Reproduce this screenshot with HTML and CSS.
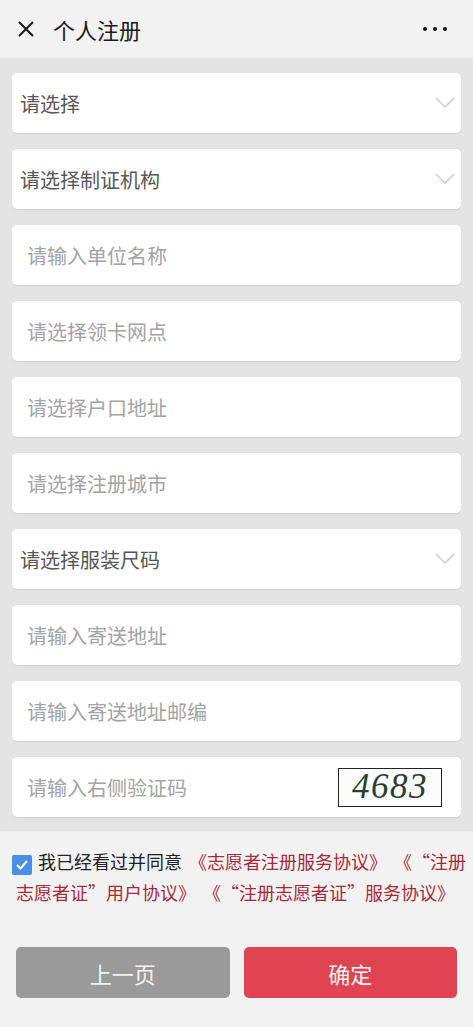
FILE: index.html
```html
<!DOCTYPE html>
<html lang="zh-CN">
<head>
    <meta charset="UTF-8">
    <meta name="viewport" content="width=device-width, initial-scale=1.0">
    <title>个人注册</title>
    <link rel="stylesheet" href="styles.css">
</head>
<body>
    <div class="header">
        <svg class="close" width="18" height="18" viewBox="0 0 18 18">
            <path d="M2 2 L16 16 M16 2 L2 16" stroke="#1a1a1a" stroke-width="2" fill="none"/>
        </svg>
        <h1>个人注册</h1>
        <div class="more"><span></span><span></span><span></span></div>
    </div>

    <div class="form">
        <div class="field select">
            <span>请选择</span>
            <svg class="arrow" width="20" height="12" viewBox="0 0 20 12"><path d="M1 1 L10 10 L19 1" stroke="#d0d0d0" stroke-width="1.6" fill="none"/></svg>
        </div>
        <div class="field select">
            <span>请选择制证机构</span>
            <svg class="arrow" width="20" height="12" viewBox="0 0 20 12"><path d="M1 1 L10 10 L19 1" stroke="#d0d0d0" stroke-width="1.6" fill="none"/></svg>
        </div>
        <div class="field input">请输入单位名称</div>
        <div class="field input">请选择领卡网点</div>
        <div class="field input">请选择户口地址</div>
        <div class="field input">请选择注册城市</div>
        <div class="field select">
            <span>请选择服装尺码</span>
            <svg class="arrow" width="20" height="12" viewBox="0 0 20 12"><path d="M1 1 L10 10 L19 1" stroke="#d0d0d0" stroke-width="1.6" fill="none"/></svg>
        </div>
        <div class="field input">请输入寄送地址</div>
        <div class="field input">请输入寄送地址邮编</div>
        <div class="field input captcha-row">
            <span>请输入右侧验证码</span>
            <div class="captcha">4683</div>
        </div>
    </div>

    <div class="agree">
        <span class="check">
            <svg width="14" height="14" viewBox="0 0 14 14"><path d="M2 7 L5.5 10.5 L12 3" stroke="#fff" stroke-width="2" fill="none"/></svg>
        </span>我已经看过并同意 <span class="link">《志愿者注册服务协议》 《“注册志愿者证”用户协议》 《“注册志愿者证”服务协议》</span>
    </div>

    <div class="buttons">
        <button class="btn prev">上一页</button>
        <button class="btn ok">确定</button>
    </div>
</body>
</html>
```

FILE: styles.css
```css
* {
    margin: 0;
    padding: 0;
    box-sizing: border-box;
}

body {
    background-color: #f2f2f2;
    font-family: "Noto Sans CJK SC", "Noto Sans", sans-serif;
    color: #222;
}

.header {
    height: 58px;
    display: flex;
    align-items: center;
    padding: 0 26px 0 17px;
    gap: 18px;
}

.header h1 {
    font-size: 22px;
    font-weight: normal;
    color: #1a1a1a;
    flex: 1;
}

.more {
    display: flex;
    gap: 6px;
}

.more span {
    width: 4px;
    height: 4px;
    border-radius: 50%;
    background-color: #111;
}

.form {
    background-color: #e4e4e4;
    padding: 15px 12px 14px;
    display: flex;
    flex-direction: column;
    gap: 16px;
}

.field {
    height: 60px;
    background-color: #fff;
    border-radius: 5px;
    box-shadow: 0 1px 1px rgba(0, 0, 0, 0.08);
    display: flex;
    align-items: center;
    font-size: 20px;
}

.select {
    justify-content: space-between;
    padding: 0 6px 0 8px;
    color: #575757;
}

.input {
    padding: 0 19px 0 15px;
    color: #a3a3a3;
}

.captcha-row {
    justify-content: space-between;
}

.captcha {
    width: 104px;
    height: 39px;
    border: 1.5px solid #222;
    background-color: #fbfdfb;
    font-family: "Liberation Serif", serif;
    font-style: italic;
    font-size: 35px;
    line-height: 36px;
    letter-spacing: 1.5px;
    color: #2c3d34;
    text-align: center;
}

.agree {
    padding: 15px 5px 0 16px;
    font-size: 18px;
    line-height: 31px;
    color: #222;
    text-spacing-trim: space-all;
    word-spacing: 3px;
}

.check {
    display: inline-flex;
    align-items: center;
    justify-content: center;
    width: 20px;
    height: 20px;
    margin-left: -4px;
    margin-right: 6px;
    border-radius: 2px;
    background-color: #4a90e2;
    vertical-align: -3px;
}

.link {
    color: #a52a36;
}

.buttons {
    display: flex;
    gap: 14px;
    padding: 39px 16px 0;
}

.btn {
    flex: 1;
    height: 51px;
    border: none;
    border-radius: 5px;
    font-family: "Noto Sans CJK SC", sans-serif;
    font-size: 22px;
    color: #f4f4f4;
}

.prev {
    background-color: #9a9a9a;
}

.ok {
    background-color: #e04452;
}
```
